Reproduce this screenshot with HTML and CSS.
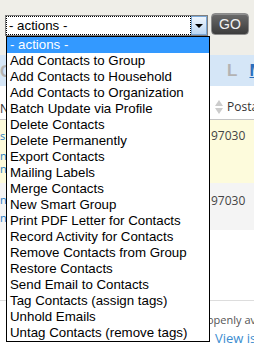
FILE: index.html
```html
<!DOCTYPE html>
<html lang="en">
<head>
  <meta charset="UTF-8">
  <meta name="viewport" content="width=device-width, initial-scale=1.0">
  <title>Search Results - Actions</title>
  <link rel="stylesheet" href="styles.css">
</head>
<body>
  <div class="page">
    <div class="toolbar">
      <div class="actions">
        <div class="select">
          <span class="select-value">- actions -</span>
          <span class="select-arrow"></span>
        </div>
        <ul class="dropdown">
          <li class="selected">- actions -</li>
          <li>Add Contacts to Group</li>
          <li>Add Contacts to Household</li>
          <li>Add Contacts to Organization</li>
          <li>Batch Update via Profile</li>
          <li>Delete Contacts</li>
          <li>Delete Permanently</li>
          <li>Export Contacts</li>
          <li>Mailing Labels</li>
          <li>Merge Contacts</li>
          <li>New Smart Group</li>
          <li>Print PDF Letter for Contacts</li>
          <li>Record Activity for Contacts</li>
          <li>Remove Contacts from Group</li>
          <li>Restore Contacts</li>
          <li>Send Email to Contacts</li>
          <li>Tag Contacts (assign tags)</li>
          <li>Unhold Emails</li>
          <li>Untag Contacts (remove tags)</li>
        </ul>
      </div>
      <button class="go">GO</button>
    </div>

    <!-- results table behind the open menu -->
    <div class="results">
      <div class="row pager">
        <div class="lead"><span class="letter">C</span></div>
        <div class="cell">
          <span class="letter">L</span>
          <a class="letter link" href="#">M</a>
        </div>
      </div>
      <div class="row head">
        <div class="lead"><span class="col-name">Name</span></div>
        <div class="cell">
          <span class="sort"><i class="up"></i><i class="down"></i></span>
          <span class="col-name">Postal</span>
        </div>
      </div>
      <div class="row odd">
        <div class="lead links">
          <a href="#">s</a>
          <a class="gap" href="#">n</a>
          <a href="#">nl</a>
        </div>
        <div class="cell">97030</div>
      </div>
      <div class="row even">
        <div class="lead links">
          <a href="#">n</a>
          <a href="#">nl</a>
        </div>
        <div class="cell">97030</div>
      </div>
      <div class="row blank"></div>
    </div>

    <div class="footer">
      <p class="note">openly available</p>
      <a class="issues" href="#">View issues</a>
    </div>
  </div>
</body>
</html>
```

FILE: styles.css
```css
/* General Styles */
body {
  margin: 0;
  padding: 0;
  background-color: #ffffff;
  font-family: "Liberation Sans", Arial, sans-serif;
}

.page {
  position: relative;
  width: 254px;
  height: 348px;
  overflow: hidden;
}

/* Toolbar with the actions select */
.toolbar {
  display: flex;
  align-items: flex-start;
  gap: 3px;
  box-sizing: border-box;
  height: 55px;
  padding: 13px 0 0 5px;
  background-color: #efeee8;
}

.actions {
  position: relative;
  margin-top: 2px;
}

.select {
  display: flex;
  box-sizing: border-box;
  width: 203px;
  height: 21px;
  border: 1px solid #7f7f7f;
  background-color: #ffffff;
}

.select-value {
  flex: 1;
  border: 1px dotted #000000;
  padding-left: 2px;
  font-size: 13.3px;
  line-height: 17px;
  color: #000000;
}

.select-arrow {
  display: flex;
  align-items: center;
  justify-content: center;
  width: 14px;
  border: 1px solid #7aa7d6;
  background: linear-gradient(#eef5fd, #bcd7f3);
}

.select-arrow::after {
  content: "";
  border-left: 4px solid transparent;
  border-right: 4px solid transparent;
  border-top: 4px solid #000000;
}

.dropdown {
  position: absolute;
  top: 21px;
  left: 1px;
  z-index: 2;
  box-sizing: border-box;
  width: 204px;
  margin: 0;
  padding: 0;
  list-style: none;
  border: 1px solid #000000;
  background-color: #ffffff;
}

.dropdown li {
  height: 16px;
  padding: 0 3px;
  font-size: 13.3px;
  line-height: 16px;
  color: #000000;
  white-space: nowrap;
}

.dropdown li.selected {
  background-color: #3399ff;
  color: #ffffff;
}

.go {
  box-sizing: border-box;
  width: 38px;
  height: 22px;
  padding: 0;
  border: 1px solid #8c8c8c;
  border-radius: 4px;
  background: linear-gradient(#6b6b6b, #3c3c3c);
  box-shadow: inset 0 1px 0 rgba(255, 255, 255, 0.25);
  color: #f2f2f2;
  font-family: "Liberation Sans", Arial, sans-serif;
  font-size: 14px;
  cursor: pointer;
}

/* Results table */
.results {
  font-family: "Open Sans", "Liberation Sans", sans-serif;
}

.row {
  display: flex;
}

.lead {
  width: 6px;
  overflow: hidden;
  white-space: nowrap;
}

.cell {
  flex: 1;
  margin-left: 204px;
  overflow: hidden;
  white-space: nowrap;
  font-size: 12px;
  color: #444444;
}

.pager {
  height: 31px;
  align-items: center;
  background-color: #d5e6f7;
}

.pager .cell {
  padding-left: 17px;
}

.letter {
  font-family: "Liberation Sans", Arial, sans-serif;
  font-size: 17px;
  font-weight: bold;
  color: #b3b3b3;
}

.letter.link {
  margin-left: 9px;
  color: #2a6ebb;
}

.head {
  box-sizing: border-box;
  height: 34px;
  align-items: center;
  border-bottom: 1px solid #c4c4c4;
  padding-top: 8px;
}

.head .cell {
  display: flex;
  align-items: center;
  padding-left: 5px;
}

.col-name {
  font-size: 12px;
  color: #333333;
}

.sort {
  display: flex;
  flex-direction: column;
  gap: 2px;
  margin-right: 4px;
}

.sort i {
  border-left: 4px solid transparent;
  border-right: 4px solid transparent;
}

.sort .up {
  border-bottom: 6px solid #cccccc;
}

.sort .down {
  border-top: 6px solid #cccccc;
}

.odd {
  height: 63px;
  background-color: #fdfbdc;
}

.odd .cell {
  padding: 7px 0 0 1px;
}

.even {
  height: 47px;
  background-color: #f4f4f4;
}

.even .cell {
  padding: 9px 0 0 1px;
}

.links a {
  display: block;
  font-size: 11px;
  color: #2a7bc4;
  text-decoration: none;
}

.odd .links {
  padding-top: 9px;
}

.odd .links a {
  line-height: 13px;
}

.odd .links .gap {
  margin-top: 7px;
}

.even .links {
  padding-top: 8px;
}

.even .links a {
  line-height: 18px;
}

.blank {
  height: 70px;
  border-bottom: 1px solid #dddddd;
}

/* Footer below the table */
.footer {
  padding: 12px 0 0 207px;
  font-family: "Open Sans", "Liberation Sans", sans-serif;
  white-space: nowrap;
}

.note {
  margin: 0;
  font-size: 11px;
  line-height: 14px;
  color: #555555;
}

.issues {
  display: block;
  margin: 3px 0 0 8px;
  font-size: 13px;
  line-height: 16px;
  color: #3b8dd0;
  text-decoration: none;
}
```
